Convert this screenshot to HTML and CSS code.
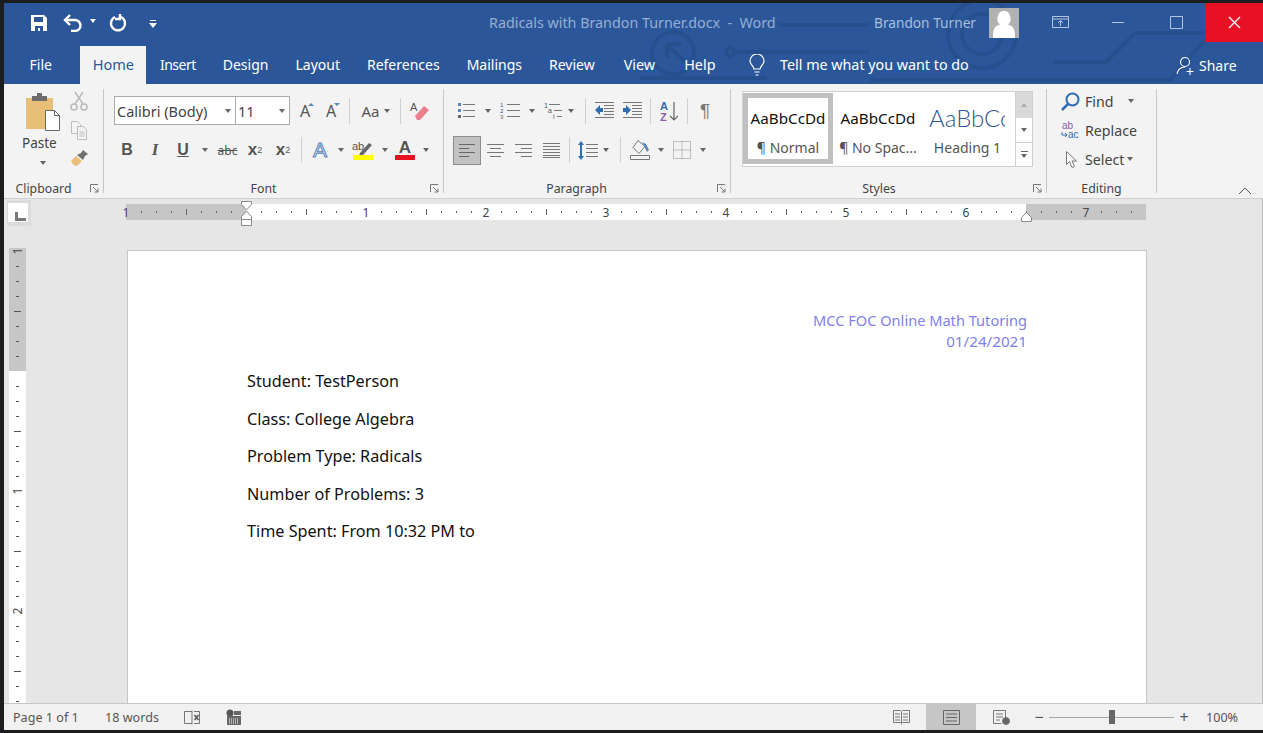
FILE: index.html
```html
<!DOCTYPE html>
<html lang="en">
    <head>
        <meta charset="UTF-8" />
        <title>Radicals with Brandon Turner.docx - Word</title>
        <link rel="stylesheet" href="styles.css">
    </head>
    <body>
        <div class="window">
            <svg class="circuit" width="623" height="81" viewBox="640 3 623 81" fill="none" stroke="#264f8e" stroke-width="4">
                <path d="M779 25h90M734 52h135M633 78h134M1053 62h53l29-29h70M870 80h300l35-40"/>
                <circle cx="982" cy="34" r="34"/>
                <circle cx="982" cy="34" r="20"/>
                <circle cx="673" cy="53" r="21"/>
                <path d="M667 44h14M667 44v14M667 44l18 18"/>
                <circle cx="730" cy="52" r="4"/>
            </svg>
            <header class="titlebar">
                <div class="qat">
                    <svg class="qat-save" width="18" height="18" viewBox="0 0 18 18"><path fill="#fff" d="M1 1h13l3 3v13H1zM4 3v5h9V3zM5 12v5h3v-3h2v3h3v-5z"/></svg>
                    <svg class="qat-undo" width="20" height="18" viewBox="0 0 20 18" fill="none" stroke="#fff" stroke-width="2.4"><path d="M2 6h10a5 5 0 0 1 0 11h-4"/><path d="M7 1L2 6l5 5"/></svg>
                    <i class="caret caret-white"></i>
                    <svg class="qat-redo" width="18" height="18" viewBox="0 0 18 18" fill="none" stroke="#fff" stroke-width="2.4"><path d="M6 3a7 7 0 1 0 6 0"/><path d="M11 -1v6H6"/></svg>
                    <svg class="qat-more" width="8" height="8" viewBox="0 0 8 8" fill="#fff"><path d="M1 0h6v1H1zM0 3h8L4 8z"/></svg>
                </div>
                <div class="doc-title">Radicals with Brandon Turner.docx&nbsp; - &nbsp;Word</div>
                <div class="user">Brandon Turner</div>
                <div class="avatar">
                    <svg width="30" height="30" viewBox="0 0 30 30"><path fill="#fff" d="M15 3a6.500 7.500 0 0 1 4 13.500c6 1.500 7 5 7 13.500H4c0-8.500 1-12 7-13.500A6.500 7.500 0 0 1 15 3z"/></svg>
                </div>
                <div class="winbtn winbtn-display">
                    <svg width="18" height="13" viewBox="0 0 18 13" fill="none" stroke="#b5c7e0"><path d="M.5.5h16v11H.5zM.5 3h16M8.500 10V5M6 7l2.500-2.500L11 7"/></svg>
                </div>
                <div class="winbtn">
                    <svg width="12" height="2" viewBox="0 0 12 2"><path fill="#b5c7e0" d="M0 0h12v1H0z"/></svg>
                </div>
                <div class="winbtn">
                    <svg width="13" height="13" viewBox="0 0 13 13" fill="none" stroke="#b5c7e0"><path d="M.5.5h12v12H.5z"/></svg>
                </div>
                <div class="winbtn winbtn-close">
                    <svg width="13" height="13" viewBox="0 0 13 13" fill="none" stroke="#fff" stroke-width="1.4"><path d="M1 1l11 11M12 1L1 12"/></svg>
                </div>
            </header>

            <nav class="tabs">
                <span class="tab tab-file">File</span>
                <span class="tab tab-active">Home</span>
                <span class="tab tab-insert">Insert</span>
                <span class="tab">Design</span>
                <span class="tab">Layout</span>
                <span class="tab">References</span>
                <span class="tab">Mailings</span>
                <span class="tab">Review</span>
                <span class="tab tab-view">View</span>
                <span class="tab tab-help">Help</span>
                <svg class="bulb" width="16" height="22" viewBox="0 0 16 22" fill="none" stroke="#fff" stroke-width="1.2"><path d="M5 15c0-3-4-4-4-8a7 7 0 0 1 14 0c0 4-4 5-4 8zM5.500 18h5M6.500 21h3"/></svg>
                <span class="tell">Tell me what you want to do</span>
                <span class="share">
                    <svg width="20" height="20" viewBox="0 0 20 20" fill="none" stroke="#fff" stroke-width="1.1"><circle cx="9" cy="6" r="4.5"/><path d="M1 18c1-5 4-7 8-7M14 12v7M10.500 15.500h7"/></svg>
                    Share
                </span>
            </nav>

            <section class="ribbon">
                <div class="group group-clipboard">
                    <div class="group-body clip-body">
                        <div class="paste">
                            <svg width="36" height="40" viewBox="0 0 36 40">
                                <path fill="#e8bf78" d="M0 5h27v31H0z"/>
                                <path fill="#6d6d6d" d="M6 3h5V0h5v3h5v5H6z"/>
                                <path fill="#fff" stroke="#666" d="M19.500 17.500h9l5 5v15h-14z"/>
                                <path fill="none" stroke="#666" d="M28.500 17.500v5h5"/>
                            </svg>
                            <span class="paste-label">Paste</span>
                            <i class="caret"></i>
                        </div>
                        <div class="clip-tools">
                            <svg width="18" height="20" viewBox="0 0 18 20" fill="none" stroke="#b9b9b9" stroke-width="1.5"><circle cx="4" cy="16" r="3"/><circle cx="14" cy="16" r="3"/><path d="M5 13L13 1M13 13L5 1"/></svg>
                            <svg width="18" height="19" viewBox="0 0 18 19" fill="#f3f3f3" stroke="#bdbdbd"><path d="M1.500.5h6l3 3v9h-9z"/><path d="M7.500 5.500h6l3 3v10h-9zM9.500 11h5M9.500 13h5M9.500 15h5"/></svg>
                            <svg width="18" height="17" viewBox="0 0 18 17"><path fill="#e8bf78" d="M1 11l5-5 6 5-5 5c-2 0-5-2-6-5z"/><path fill="#707070" d="M7 5l4-2 2-3 5 4-3 2-2 4z"/></svg>
                        </div>
                    </div>
                    <div class="group-label">Clipboard<svg class="launcher" width="9" height="9" viewBox="0 0 9 9" fill="none" stroke="#777"><path d="M.5 8V.5H8M3 3l5 5M8 4.500V8H4.500"/></svg></div>
                </div>

                <div class="group group-font">
                    <div class="group-body">
                        <div class="row">
                            <div class="combo combo-font">Calibri (Body)<i class="caret"></i></div>
                            <div class="combo combo-size">11<i class="caret"></i></div>
                            <span class="t w26 glyph">A<i class="mini-up"></i></span>
                            <span class="t w26 glyph">A<i class="mini-down"></i></span>
                            <i class="sep sep-a"></i>
                            <span class="t w37 case">Aa<i class="caret"></i></span>
                            <i class="sep sep-b"></i>
                            <span class="t w26">
                                <svg width="20" height="20" viewBox="0 0 20 20"><text x="0" y="10" font-size="11" fill="#555" font-family="Liberation Sans">A</text><path fill="#ea7d8e" d="M5 15l9-10 5 4-9 10H7z"/></svg>
                            </span>
                        </div>
                        <div class="row row-lower">
                            <span class="t w26 fmt fmt-b">B</span>
                            <span class="t w30 fmt fmt-i">I</span>
                            <span class="t w26 fmt fmt-u">U</span>
                            <span class="t w18"><i class="caret"></i></span>
                            <span class="t w27 fmt-abc">abc</span>
                            <span class="t w28 fmt fmt-x">x<sub>2</sub></span>
                            <span class="t w28 fmt fmt-x">x<sup>2</sup></span>
                            <i class="sep sep-c"></i>
                            <span class="t w28 fmt-effect">A</span>
                            <span class="t w14"><i class="caret"></i></span>
                            <span class="t w30 hl">
                                <svg width="22" height="20" viewBox="0 0 22 20"><text x="0" y="10" font-size="11" fill="#555" font-family="Liberation Sans">ab</text><path fill="#666" d="M8 13L17 3l3 2-9 10-4 1z"/><path fill="#ffff00" d="M1 15h20v5H1z"/></svg>
                            </span>
                            <span class="t w13"><i class="caret"></i></span>
                            <span class="t w28 colorA">A</span>
                            <span class="t w14"><i class="caret"></i></span>
                        </div>
                    </div>
                    <div class="group-label">Font<svg class="launcher" width="9" height="9" viewBox="0 0 9 9" fill="none" stroke="#777"><path d="M.5 8V.5H8M3 3l5 5M8 4.500V8H4.500"/></svg></div>
                </div>

                <div class="group group-paragraph">
                    <div class="group-body">
                        <div class="row">
                            <span class="t w26"><svg width="18" height="17" viewBox="0 0 18 17" stroke="#777"><path d="M6 2.500h12M6 8.500h12M6 14.500h12"/><path stroke="none" fill="#5b86bb" d="M1 1h3v3H1zM1 7h3v3H1z"/><path stroke="none" fill="#666" d="M1 13h3v3H1z"/></svg></span>
                            <span class="t w18"><i class="caret"></i></span>
                            <span class="t w26"><svg width="20" height="17" viewBox="0 0 20 17" stroke="#777"><path d="M7 2.500h13M7 8.500h13M7 14.500h13"/><text x="0" y="5" font-size="6" fill="#2b579a" stroke="none" font-family="Liberation Sans">1</text><text x="0" y="11" font-size="6" fill="#2b579a" stroke="none" font-family="Liberation Sans">2</text><text x="0" y="17" font-size="6" fill="#666" stroke="none" font-family="Liberation Sans">3</text></svg></span>
                            <span class="t w18"><i class="caret"></i></span>
                            <span class="t w26"><svg width="20" height="17" viewBox="0 0 20 17" stroke="#777"><path d="M5 2.500h11M10 8.500h8M13 14.500h5"/><text x="0" y="6" font-size="7" fill="#2b579a" stroke="none" font-family="Liberation Sans">1</text><text x="4" y="11" font-size="7" fill="#555" stroke="none" font-family="Liberation Sans">a</text><text x="9" y="17" font-size="7" fill="#555" stroke="none" font-family="Liberation Sans">i</text></svg></span>
                            <span class="t w8"><i class="caret"></i></span>
                            <i class="sep sep-d"></i>
                            <span class="t w28"><svg width="19" height="17" viewBox="0 0 19 17" stroke="#777"><path d="M0 .5h19M9 3.500h10M9 6.500h10M9 9.500h10M9 12.500h10M0 15.500h19"/><path stroke="none" fill="#2f6db1" d="M0 8l5-5v3h3v4H5v3z"/></svg></span>
                            <span class="t w28"><svg width="19" height="17" viewBox="0 0 19 17" stroke="#777"><path d="M0 .5h19M9 3.500h10M9 6.500h10M9 9.500h10M9 12.500h10M0 15.500h19"/><path stroke="none" fill="#2f6db1" d="M8 8L3 3v3H0v4h3v3z"/></svg></span>
                            <i class="sep sep-e"></i>
                            <span class="t w28"><svg width="18" height="22" viewBox="0 0 18 22" fill="none" stroke="#666" stroke-width="1.2"><path d="M14 2v18M10 16l4 4 4-4"/><text x="0" y="10" font-size="11" font-weight="700" fill="#2f6db1" stroke="none" font-family="Liberation Sans">A</text><text x="0" y="21" font-size="11" font-weight="700" fill="#8b5ca8" stroke="none" font-family="Liberation Sans">Z</text></svg></span>
                            <i class="sep sep-f"></i>
                            <span class="t w28 pilcrow">¶</span>
                        </div>
                        <div class="row row-lower">
                            <span class="t w28 align-on"><svg width="16" height="13" viewBox="0 0 16 13" stroke="#666"><path d="M0 .5h16M0 4.500h10M0 8.500h16M0 12.500h10"/></svg></span>
                            <span class="t w28"><svg width="17" height="13" viewBox="0 0 17 13" stroke="#777"><path d="M0 .5h17M3 4.500h11M0 8.500h17M3 12.500h11"/></svg></span>
                            <span class="t w28"><svg width="17" height="13" viewBox="0 0 17 13" stroke="#777"><path d="M0 .5h17M6 4.500h11M0 8.500h17M6 12.500h11"/></svg></span>
                            <span class="t w28"><svg width="17" height="15" viewBox="0 0 17 15" stroke="#777"><path d="M0 .5h17M0 3.500h17M0 6.500h17M0 9.500h17M0 12.500h17M0 14.500h17"/></svg></span>
                            <i class="sep sep-g"></i>
                            <span class="t w26"><svg width="20" height="19" viewBox="0 0 20 19" stroke="#777"><path d="M8 3.500h12M8 7.500h12M8 11.500h12M8 15.500h12"/><path stroke="none" fill="#2f6db1" d="M3 0l3 4H4v11h2l-3 4-3-4h2V4H0z"/></svg></span>
                            <span class="t w10"><i class="caret"></i></span>
                            <i class="sep sep-h"></i>
                            <span class="t w30"><svg width="20" height="20" viewBox="0 0 20 20" fill="none" stroke="#777"><path d="M.5 15.500h19v4H.5zM8 .5l7 6-6 7-6-6z"/><path fill="#5b86bb" stroke="none" d="M12 2l4 2 3 6-2 2-2-4z"/></svg></span>
                            <span class="t w12"><i class="caret"></i></span>
                            <span class="t w30"><svg width="18" height="18" viewBox="0 0 18 18" fill="none" stroke="#888" stroke-dasharray="1 1"><path d="M.5.5h17v17H.5zM9 .5v17M.5 9h17"/></svg></span>
                            <span class="t w12"><i class="caret"></i></span>
                        </div>
                    </div>
                    <div class="group-label">Paragraph<svg class="launcher" width="9" height="9" viewBox="0 0 9 9" fill="none" stroke="#777"><path d="M.5 8V.5H8M3 3l5 5M8 4.500V8H4.500"/></svg></div>
                </div>

                <div class="group group-styles">
                    <div class="group-body">
                        <div class="gallery">
                            <div class="style style-on"><span class="sample">AaBbCcDd</span><span class="style-name">¶ Normal</span></div>
                            <div class="style"><span class="sample">AaBbCcDd</span><span class="style-name">¶ No Spac...</span></div>
                            <div class="style style-h1"><span class="sample sample-h1">AaBbCc</span><span class="style-name">Heading 1</span></div>
                            <div class="gallery-scroll">
                                <span class="scroll-btn scroll-up"><i class="caret caret-up"></i></span>
                                <span class="scroll-btn scroll-down"><i class="caret"></i></span>
                                <span class="scroll-btn scroll-more"><i class="more-line"></i><i class="caret"></i></span>
                            </div>
                        </div>
                    </div>
                    <div class="group-label">Styles<svg class="launcher" width="9" height="9" viewBox="0 0 9 9" fill="none" stroke="#777"><path d="M.5 8V.5H8M3 3l5 5M8 4.500V8H4.500"/></svg></div>
                </div>

                <div class="group group-editing">
                    <div class="group-body editing-body">
                        <div class="edit-row">
                            <svg width="19" height="19" viewBox="0 0 19 19" fill="none" stroke="#2f6db1" stroke-width="2"><circle cx="11.5" cy="7.5" r="6"/><path stroke-width="2.5" d="M7 12l-6 6"/></svg>
                            <span class="edit-text">Find</span><i class="caret caret-find"></i>
                        </div>
                        <div class="edit-row">
                            <svg width="19" height="19" viewBox="0 0 19 19"><text x="1" y="8" font-size="10" fill="#8b5ca8" font-family="Liberation Sans">ab</text><text x="7" y="17" font-size="10" fill="#2f6db1" font-family="Liberation Sans">ac</text><path d="M1 11v3h5M4 12l2 2-2 2" fill="none" stroke="#2f6db1"/></svg>
                            <span class="edit-text">Replace</span>
                        </div>
                        <div class="edit-row">
                            <svg width="19" height="19" viewBox="0 0 19 19" fill="#fff" stroke="#777"><path d="M5.500 1.500v13l3-3 2.500 6 2.500-1-2.500-5.500h4.500z"/></svg>
                            <span class="edit-text">Select</span><i class="caret caret-select"></i>
                        </div>
                    </div>
                    <div class="group-label">Editing</div>
                </div>

                <svg class="collapse" width="14" height="8" viewBox="0 0 14 8" fill="none" stroke="#555"><path d="M1 7l6-6 6 6"/></svg>
            </section>

            <div class="workspace">
                <div class="ruler-row">
                    <div class="tab-stop"><i></i></div>
                    <div class="hruler">
                        <div class="inch inch-off"><b class="num">1</b></div>
                        <div class="inch"><b class="num">1</b></div>
                        <div class="inch"><b class="num">2</b></div>
                        <div class="inch"><b class="num">3</b></div>
                        <div class="inch"><b class="num">4</b></div>
                        <div class="inch"><b class="num">5</b></div>
                        <div class="inch"><b class="num">6</b></div>
                        <div class="inch inch-half"></div>
                        <div class="inch inch-off"><b class="num">7</b></div>
                        <svg class="marker marker-left" width="12" height="29" viewBox="0 0 12 29" fill="#fff" stroke="#8a8a8a"><path d="M.5.5h10v3L5.500 9 .5 3.500zM5.500 10l5 5.500v3H.5v-3zM.5 18.500h10v6H.5z"/></svg>
                        <svg class="marker marker-right" width="12" height="11" viewBox="0 0 12 11" fill="#fff" stroke="#8a8a8a"><path d="M5.500.5l5 5v4H.5v-4z"/></svg>
                    </div>
                </div>
                <div class="doc-row">
                    <div class="vruler">
                        <div class="vinch vinch-off"><b class="vnum">1</b></div>
                        <div class="vinch"><b class="vnum">1</b></div>
                        <div class="vinch"><b class="vnum">2</b></div>
                        <div class="vinch"></div>
                    </div>
                    <article class="page">
                        <div class="page-header">
                            <p>MCC FOC Online Math Tutoring</p>
                            <p class="page-date">01/24/2021</p>
                        </div>
                        <p class="line">Student: TestPerson</p>
                        <p class="line">Class: College Algebra</p>
                        <p class="line">Problem Type: Radicals</p>
                        <p class="line">Number of Problems: 3</p>
                        <p class="line">Time Spent: From 10:32 PM to</p>
                    </article>
                </div>
            </div>

            <footer class="statusbar">
                <span class="st-page">Page 1 of 1</span>
                <span class="st-words">18 words</span>
                <svg class="st-book" width="18" height="15" viewBox="0 0 18 15" fill="none" stroke="#777"><path d="M9 1.500H1.500v12H9M9 .5v14M11 1.500h5.500v12H11"/><path stroke="#555" stroke-width="1.5" d="M11.500 5l4 5M15.500 5l-4 5"/></svg>
                <svg class="st-macro" width="16" height="16" viewBox="0 0 16 16"><circle cx="4" cy="4" r="3.5" fill="#555"/><path fill="#666" d="M8 2h7v4H8zM1 7h14v9H1z"/><path stroke="#fff" stroke-dasharray="1 1" d="M3 10h10M3 12h10M3 14h10"/></svg>
                <span class="st-space"></span>
                <span class="view-btn"><svg width="17" height="15" viewBox="0 0 17 15" fill="none" stroke="#777"><path d="M.5.5h7l1 1 1-1h7v12h-7l-1 1-1-1h-7zM8.500 1.500v13M2 4h5M2 7h5M2 10h5M10 4h5M10 7h5M10 10h5"/></svg></span>
                <span class="view-btn view-on"><svg width="17" height="15" viewBox="0 0 17 15" fill="none" stroke="#666"><path d="M.5.5h16v14H.5zM3 4h11M3 7.500h11M3 11h11"/></svg></span>
                <span class="view-btn"><svg width="17" height="15" viewBox="0 0 17 15" fill="none" stroke="#777"><path d="M.5.5h12v10M.5.5v13h8M3 4h7M3 7h7M3 10h4"/><circle cx="13" cy="11" r="3.5" fill="#666"/></svg></span>
                <div class="zoom">
                    <span class="zoom-sign">−</span>
                    <div class="slider"><i class="thumb"></i></div>
                    <span class="zoom-sign">+</span>
                </div>
                <span class="st-percent">100%</span>
            </footer>
        </div>
    </body>
</html>
```
FILE: styles.css
```css
* {
    box-sizing: border-box;
}

html,
body {
    margin: 0;
    height: 733px;
    overflow: hidden;
    background-color: #1d1d1f;
}

body {
    padding: 3px 0 3px 4px;
    font-family: "Noto Sans", "Open Sans", sans-serif;
    color: #444;
}

p {
    margin: 0;
}

.window {
    position: relative;
    height: 727px;
    display: flex;
    flex-direction: column;
    background-color: #2b579a;
    overflow: hidden;
}

.circuit {
    position: absolute;
    top: 0;
    left: 636px;
}

/* title bar */
.titlebar {
    position: relative;
    height: 39px;
    flex: none;
    display: flex;
    align-items: center;
}

.qat {
    width: 420px;
    display: flex;
    align-items: center;
    padding-left: 26px;
    flex: none;
}

.qat-undo {
    margin-left: 15px;
}

.qat-redo {
    margin-left: 13px;
}

.qat-more {
    margin-left: 22px;
    margin-top: 3px;
}

.caret {
    display: inline-block;
    width: 0;
    height: 0;
    border-left: 3.5px solid transparent;
    border-right: 3.5px solid transparent;
    border-top: 4px solid #666;
}

.caret-white {
    border-top-color: #fff;
    margin-left: 7px;
    margin-top: -3px;
}

.caret-up {
    border-top: 0;
    border-bottom: 4px solid #aaa;
}

.doc-title {
    width: 450px;
    padding-left: 65px;
    font-size: 14.3px;
    color: #96aed3;
    white-space: nowrap;
}

.user {
    width: 115px;
    font-size: 13.7px;
    color: #a9bedb;
    white-space: nowrap;
}

.avatar {
    width: 30px;
    height: 30px;
    background-color: #b1b1b1;
    flex: none;
}

.winbtn {
    width: 58px;
    height: 39px;
    display: flex;
    align-items: center;
    justify-content: center;
    flex: none;
}

.winbtn-display {
    margin-left: 12px;
    padding-left: 2px;
}

.winbtn-close {
    background-color: #e81123;
}

/* tabs */
.tabs {
    position: relative;
    height: 42px;
    flex: none;
    display: flex;
    align-items: flex-end;
    padding-left: 12px;
    font-size: 14px;
    color: #fff;
}

.tab {
    height: 38px;
    padding: 0 13.5px 2px;
    display: flex;
    align-items: center;
    white-space: nowrap;
}

.tab-file {
    margin-right: 15px;
}

.tab-active {
    background-color: #f3f3f3;
    color: #2b579a;
    width: 66px;
    padding: 0 0 2px;
    justify-content: center;
    font-size: 14.5px;
}

.tab-insert {
    letter-spacing: -0.5px;
}

.tab-view,
.tab-help {
    margin-left: 2px;
    font-size: 14.4px;
}

.bulb {
    margin: 0 0 8px 20px;
}

.tell {
    height: 38px;
    display: flex;
    align-items: center;
    padding-bottom: 2px;
    margin-left: 15px;
    width: 396px;
    font-size: 14.3px;
}

.share {
    height: 38px;
    display: flex;
    align-items: center;
    gap: 3px;
    padding-top: 1px;
}

/* ribbon */
.ribbon {
    position: relative;
    height: 115px;
    flex: none;
    display: flex;
    background-color: #f3f3f3;
    border-bottom: 1px solid #cfcfcf;
    padding-top: 5px;
    font-size: 13px;
}

.group {
    height: 104px;
    flex: none;
    display: flex;
    flex-direction: column;
    border-right: 1px solid #c6c6c6;
}

.group-body {
    height: 92px;
    flex: none;
}

.group-label {
    position: relative;
    font-size: 12.3px;
    color: #444;
    text-align: center;
    line-height: 16px;
}

.launcher {
    position: absolute;
    right: 4px;
    top: 3px;
}

.group-clipboard {
    width: 100px;
}

.group-clipboard .group-label {
    padding-right: 20px;
}

.group-font {
    width: 340px;
    padding-left: 10px;
}

.group-paragraph {
    width: 287px;
    padding-left: 9px;
}

.group-styles {
    width: 316px;
    padding-left: 11px;
}

.group-editing {
    width: 110px;
}

.group-font .group-label,
.group-paragraph .group-label,
.group-styles .group-label {
    margin-left: -30px;
}

.clip-body {
    display: flex;
}

.paste {
    width: 62px;
    padding: 4px 0 0 22px;
    display: flex;
    flex-direction: column;
    align-items: flex-start;
}

.paste-label {
    font-size: 13.5px;
    line-height: 19px;
    margin: 1px 0 0 -4px;
    color: #444;
}

.paste .caret {
    margin: 8px 0 0 14px;
}

.clip-tools {
    padding: 2px 0 0 4px;
    display: flex;
    flex-direction: column;
    gap: 10px;
}

.row {
    height: 37px;
    display: flex;
    align-items: center;
    margin-top: 3px;
}

.row-lower {
    height: 30px;
    margin-top: 6px;
}

.t {
    height: 28px;
    display: flex;
    align-items: center;
    justify-content: center;
    flex: none;
    color: #555;
}

.w8 { width: 8px; }
.w10 { width: 10px; }
.w12 { width: 12px; }
.w13 { width: 13px; }
.w14 { width: 14px; }
.w18 { width: 18px; }
.w26 { width: 26px; }
.w27 { width: 27px; }
.w28 { width: 28px; }
.w30 { width: 30px; }
.w37 { width: 37px; }

.sep {
    width: 1px;
    height: 26px;
    background-color: #d0d0d0;
    flex: none;
}

.sep-a { margin: 0 7px 0 5px; }
.sep-b { margin: 0 6px 0 6px; }
.sep-c { margin: 0 4px 0 4px; }
.sep-d { margin: 0 4px 0 10px; }
.sep-e { margin: 0 4px 0 4px; }
.sep-f { margin: 0 3px 0 4px; }
.sep-g { margin: 0 5px 0 4px; }
.sep-h { margin: 0 4px 0 9px; }

.combo {
    height: 29px;
    background-color: #fff;
    border: 1px solid #ababab;
    display: flex;
    align-items: center;
    justify-content: space-between;
    padding: 0 4px 0 2px;
    font-size: 14.5px;
    color: #444;
    flex: none;
    white-space: nowrap;
}

.combo-font {
    width: 122px;
}

.combo-size {
    width: 55px;
    margin-left: -1px;
    margin-right: 2px;
}

.glyph {
    font-size: 16px;
    position: relative;
}

.mini-up,
.mini-down {
    position: absolute;
    top: 6px;
    right: 4px;
    border-left: 3px solid transparent;
    border-right: 3px solid transparent;
}

.mini-up {
    border-bottom: 3px solid #5b86bb;
}

.mini-down {
    border-top: 3px solid #5b86bb;
}

.case {
    font-size: 15px;
    gap: 4px;
}

.fmt {
    font-family: "Liberation Sans", sans-serif;
    font-weight: 700;
    font-size: 16px;
}

.fmt-i {
    font-style: italic;
    font-family: "Liberation Serif", serif;
    font-size: 17px;
}

.fmt-u {
    text-decoration: underline;
}

.fmt-abc {
    font-size: 12px;
    text-decoration: line-through;
}

.fmt-x {
    font-size: 17px;
}

.fmt-x sub,
.fmt-x sup {
    font-size: 9px;
    font-weight: 400;
    line-height: 0;
}

.fmt-x sub {
    vertical-align: -4px;
}

.fmt-x sup {
    vertical-align: 7px;
}

.fmt-effect {
    font-family: "Liberation Sans", sans-serif;
    font-size: 21px;
    color: #d5e6f7;
    -webkit-text-stroke: 1px #5b86bb;
}

.colorA {
    flex-direction: column;
    font-family: "Liberation Sans", sans-serif;
    font-size: 17px;
    line-height: 15px;
    font-weight: 700;
}

.colorA::after {
    content: "";
    width: 20px;
    height: 5px;
    background-color: #e81123;
}

.pilcrow {
    font-family: "Liberation Sans", sans-serif;
    font-size: 19px;
    color: #777;
}

.align-on {
    height: 29px;
    background-color: #c2c2c2;
    border: 1px solid #8c8c8c;
}

/* styles gallery */
.gallery {
    height: 76px;
    margin-top: 2px;
    width: 291px;
    display: flex;
    background-color: #fff;
    border: 1px solid #d0d0d0;
}

.style {
    width: 90px;
    padding-top: 8px;
    display: flex;
    flex-direction: column;
    align-items: center;
    flex: none;
    overflow: hidden;
}

.style-on {
    border: 5px solid #c0c0c0;
    padding-top: 0;
    height: 71px;
    margin-top: 1px;
}

.sample {
    height: 36px;
    line-height: 36px;
    font-size: 15.2px;
    color: #111;
    white-space: nowrap;
}

.sample-h1 {
    font-family: "Lato", sans-serif;
    font-size: 24px;
    font-weight: 300;
    color: #2f5496;
    width: 76px;
    overflow: hidden;
    align-self: flex-start;
    margin-left: 6px;
}

.style-on .sample {
    height: 38px;
    line-height: 40px;
}

.style-name {
    font-size: 14px;
    line-height: 24px;
    color: #555;
    white-space: nowrap;
}

.style-h1 {
    width: 91px;
}

.style-h1 .style-name {
    margin-left: -2px;
}

.gallery-scroll {
    width: 17px;
    display: flex;
    flex-direction: column;
    flex: none;
    margin-left: 1px;
}

.scroll-btn {
    display: flex;
    flex-direction: column;
    align-items: center;
    justify-content: center;
    gap: 2px;
    border-left: 1px solid #d0d0d0;
}

.scroll-up {
    height: 26px;
    background-color: #d9d9d9;
}

.scroll-down {
    height: 24px;
}

.scroll-more {
    height: 24px;
    border-top: 1px solid #d0d0d0;
}

.more-line {
    width: 7px;
    height: 1px;
    background-color: #666;
}

/* editing */
.editing-body {
    padding-left: 14px;
    display: flex;
    flex-direction: column;
    gap: 5px;
}

.edit-row {
    height: 24px;
    display: flex;
    align-items: center;
    gap: 5px;
    font-size: 14.2px;
}

.edit-text {
    color: #444;
}

.caret-find {
    margin-left: 9px;
}

.caret-select {
    margin-left: -2px;
}

.collapse {
    position: absolute;
    right: 11px;
    bottom: 3px;
}

/* rulers and page */
.workspace {
    flex: 1;
    min-height: 0;
    background-color: #e6e6e6;
    display: flex;
    flex-direction: column;
    overflow: hidden;
    border-right: 1px solid #bbb;
}

.ruler-row {
    height: 51px;
    flex: none;
    display: flex;
    padding: 1px 0 0 3px;
}

.tab-stop {
    width: 24px;
    height: 26px;
    background-color: #dcdcdc;
    padding: 3px 3px 4px 1px;
    flex: none;
}

.tab-stop i {
    display: block;
    width: 20px;
    height: 19px;
    background: #fff;
    position: relative;
}

.tab-stop i::after {
    content: "";
    position: absolute;
    left: 7px;
    top: 9px;
    width: 8px;
    height: 6px;
    border-left: 3px solid #777;
    border-bottom: 3px solid #777;
}

.hruler {
    position: relative;
    margin: 4px 0 0 95px;
    height: 16px;
    display: flex;
    flex: none;
}

.inch {
    position: relative;
    width: 120px;
    height: 16px;
    flex: none;
    background-color: #fff;
    background-image:
        repeating-linear-gradient(90deg, #666 0 1px, transparent 1px 15px),
        linear-gradient(90deg, transparent 60px, #666 60px 61px, transparent 61px);
    background-size: 100% 2px, 100% 6px;
    background-position: 0 center, 0 center;
    background-repeat: no-repeat;
}

.inch-half {
    width: 60px;
}

.inch-off {
    background-color: #c6c6c6;
}

.num {
    position: absolute;
    right: -6px;
    top: 1px;
    width: 12px;
    background-color: #fff;
    font-weight: 400;
    font-size: 12px;
    line-height: 15px;
    text-align: center;
    color: #444;
    z-index: 1;
}

.inch-off .num {
    background-color: #c6c6c6;
}

.inch:first-child .num {
    right: auto;
    left: -6px;
    background-color: transparent;
}

.inch:first-child {
    background-position: 15px center, 0 center;
}

.inch:last-of-type .num {
    right: auto;
    left: 54px;
}

.marker {
    position: absolute;
    z-index: 2;
}

.marker-left {
    left: 115px;
    top: -3px;
}

.marker-right {
    left: 895px;
    top: 8px;
}

.doc-row {
    flex: 1;
    min-height: 0;
    display: flex;
    padding-left: 5px;
}

.vruler {
    width: 17px;
    flex: none;
    margin-top: -2px;
    overflow: hidden;
}

.vinch {
    position: relative;
    width: 17px;
    height: 120px;
    background-color: #fff;
    background-image:
        repeating-linear-gradient(180deg, #555 0 1px, transparent 1px 15px),
        linear-gradient(180deg, transparent 60px, #555 60px 61px, transparent 61px);
    background-size: 3px 100%, 7px 100%;
    background-position: center 15px, center 0;
    background-repeat: no-repeat;
}

.vinch-off {
    height: 123px;
    background-color: #c6c6c6;
    background-position: center 18px, center 3px;
}

.vnum {
    position: absolute;
    left: 3px;
    bottom: -6px;
    width: 11px;
    height: 12px;
    line-height: 12px;
    background-color: #fff;
    font-weight: 400;
    font-size: 12px;
    text-align: center;
    color: #444;
    transform: rotate(-90deg);
    z-index: 1;
}

.vinch-off .vnum {
    top: -3px;
    bottom: auto;
    background-color: #c6c6c6;
}

.page {
    margin: 0 0 0 101px;
    width: 1020px;
    background-color: #fff;
    border: 1px solid #c6c6c6;
    border-bottom: 0;
    padding: 59px 119px 0 119px;
    flex: none;
    font-size: 16.2px;
    color: #111;
}

.page-header {
    text-align: right;
    font-size: 14.6px;
    color: #7f7fef;
    line-height: 21px;
    margin-bottom: 19px;
}

.page-date {
    font-size: 15.2px;
}

.line {
    height: 37.5px;
    line-height: 21px;
}

/* status bar */
.statusbar {
    height: 27px;
    flex: none;
    background-color: #f1f1f1;
    border-top: 1px solid #c6c6c6;
    display: flex;
    align-items: center;
    font-size: 12.6px;
    color: #555;
    padding-left: 9px;
}

.st-page {
    width: 92px;
}

.st-words {
    width: 78px;
}

.st-macro {
    margin-left: 25px;
}

.st-space {
    flex: 1;
}

.view-btn {
    width: 50px;
    height: 26px;
    display: flex;
    align-items: center;
    justify-content: center;
}

.view-on {
    background-color: #c6c6c6;
}

.zoom {
    display: flex;
    align-items: center;
    margin-left: 3px;
}

.zoom-sign {
    width: 20px;
    font-size: 16px;
    text-align: center;
}

.slider {
    position: relative;
    width: 125px;
    height: 1px;
    background-color: #a5a5a5;
}

.thumb {
    position: absolute;
    left: 60px;
    top: -7px;
    width: 6px;
    height: 14px;
    background-color: #666;
}

.st-percent {
    width: 69px;
    padding-left: 12px;
}
```
